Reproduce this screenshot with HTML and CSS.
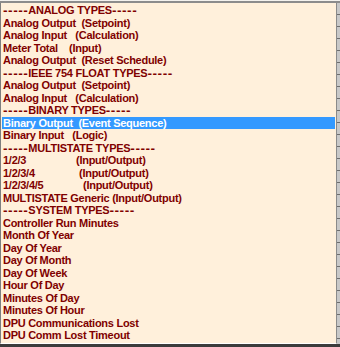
FILE: index.html
```html
<!DOCTYPE html>
<html lang="en">
<head>
  <meta charset="UTF-8" />
  <title>Point Types</title>
  <link rel="stylesheet" href="styles.css">
</head>
<body>

<div class="frame">
  <div class="listbox">
    <ul class="items">
      <li><span class="dash">-----</span>ANALOG TYPES<span class="dash">-----</span></li>
      <li>Analog Output  (Setpoint)</li>
      <li>Analog Input   (Calculation)</li>
      <li>Meter Total    (Input)</li>
      <li>Analog Output  (Reset Schedule)</li>
      <li><span class="dash">-----</span>IEEE 754 FLOAT TYPES<span class="dash">-----</span></li>
      <li>Analog Output  (Setpoint)</li>
      <li>Analog Input   (Calculation)</li>
      <li><span class="dash">-----</span>BINARY TYPES<span class="dash">-----</span></li>
      <li class="selected">Binary Output  (Event Sequence)</li>
      <li>Binary Input   (Logic)</li>
      <li><span class="dash">-----</span>MULTISTATE TYPES<span class="dash">-----</span></li>
      <li><span class="state state-3">1/2/3</span>(Input/Output)</li>
      <li><span class="state state-4">1/2/3/4</span>(Input/Output)</li>
      <li><span class="state state-5">1/2/3/4/5</span>(Input/Output)</li>
      <li>MULTISTATE Generic (Input/Output)</li>
      <li><span class="dash">-----</span>SYSTEM TYPES<span class="dash">-----</span></li>
      <li>Controller Run Minutes</li>
      <li>Month Of Year</li>
      <li>Day Of Year</li>
      <li>Day Of Month</li>
      <li>Day Of Week</li>
      <li>Hour Of Day</li>
      <li>Minutes Of Day</li>
      <li>Minutes Of Hour</li>
      <li>DPU Communications Lost</li>
      <li>DPU Comm Lost Timeout</li>
    </ul>
    <div class="ruler"></div>
  </div>
  <div class="bottom-edge"></div>
</div>

</body>
</html>
```

FILE: styles.css
```css
html, body {
  margin: 0;
  padding: 0;
}

body {
  background: #f4f2ee;
  font-family: "Liberation Sans", Arial, sans-serif;
}

.frame {
  width: 340px;
  height: 347px;
  display: flex;
  flex-direction: column;
  overflow: hidden;
}

.listbox {
  flex: 1;
  display: flex;
  margin-top: 1px;
  border-top: 2px solid #8c8c8c;
  min-height: 0;
}

.items {
  flex: 1;
  list-style: none;
  margin: 0;
  padding: 1px 1px 0 1px;
  background: #fff0db;
  border-left: 1px solid #7e7e7e;
  border-right: 1px solid #8a8a8a;
  border-bottom: 1px solid #ffffff;
}

.items li {
  height: 12.5px;
  line-height: 12.5px;
  padding-left: 1px;
  font-size: 11px;
  font-weight: bold;
  letter-spacing: -0.27px;
  color: #800000;
  white-space: pre;
}

.items li.selected {
  background: #3399ff;
  color: #ffffff;
}

/* the dialog font draws wider hyphens than Arial */
.dash {
  font-family: "DejaVu Sans", sans-serif;
  letter-spacing: 0.5px;
}

/* multistate labels are padded out with spaces in the source list */
.state {
  display: inline-block;
}

.state-3 {
  width: 73px;
}

.state-4 {
  width: 76px;
}

.state-5 {
  width: 80px;
}

.ruler {
  width: 3px;
  background-color: #c8c8c8;
  background-image: repeating-linear-gradient(to bottom, transparent 0, transparent 11px, #6e6e6e 11px, #6e6e6e 12px);
}

.bottom-edge {
  height: 3px;
  background: #3c3c3c;
}
```
